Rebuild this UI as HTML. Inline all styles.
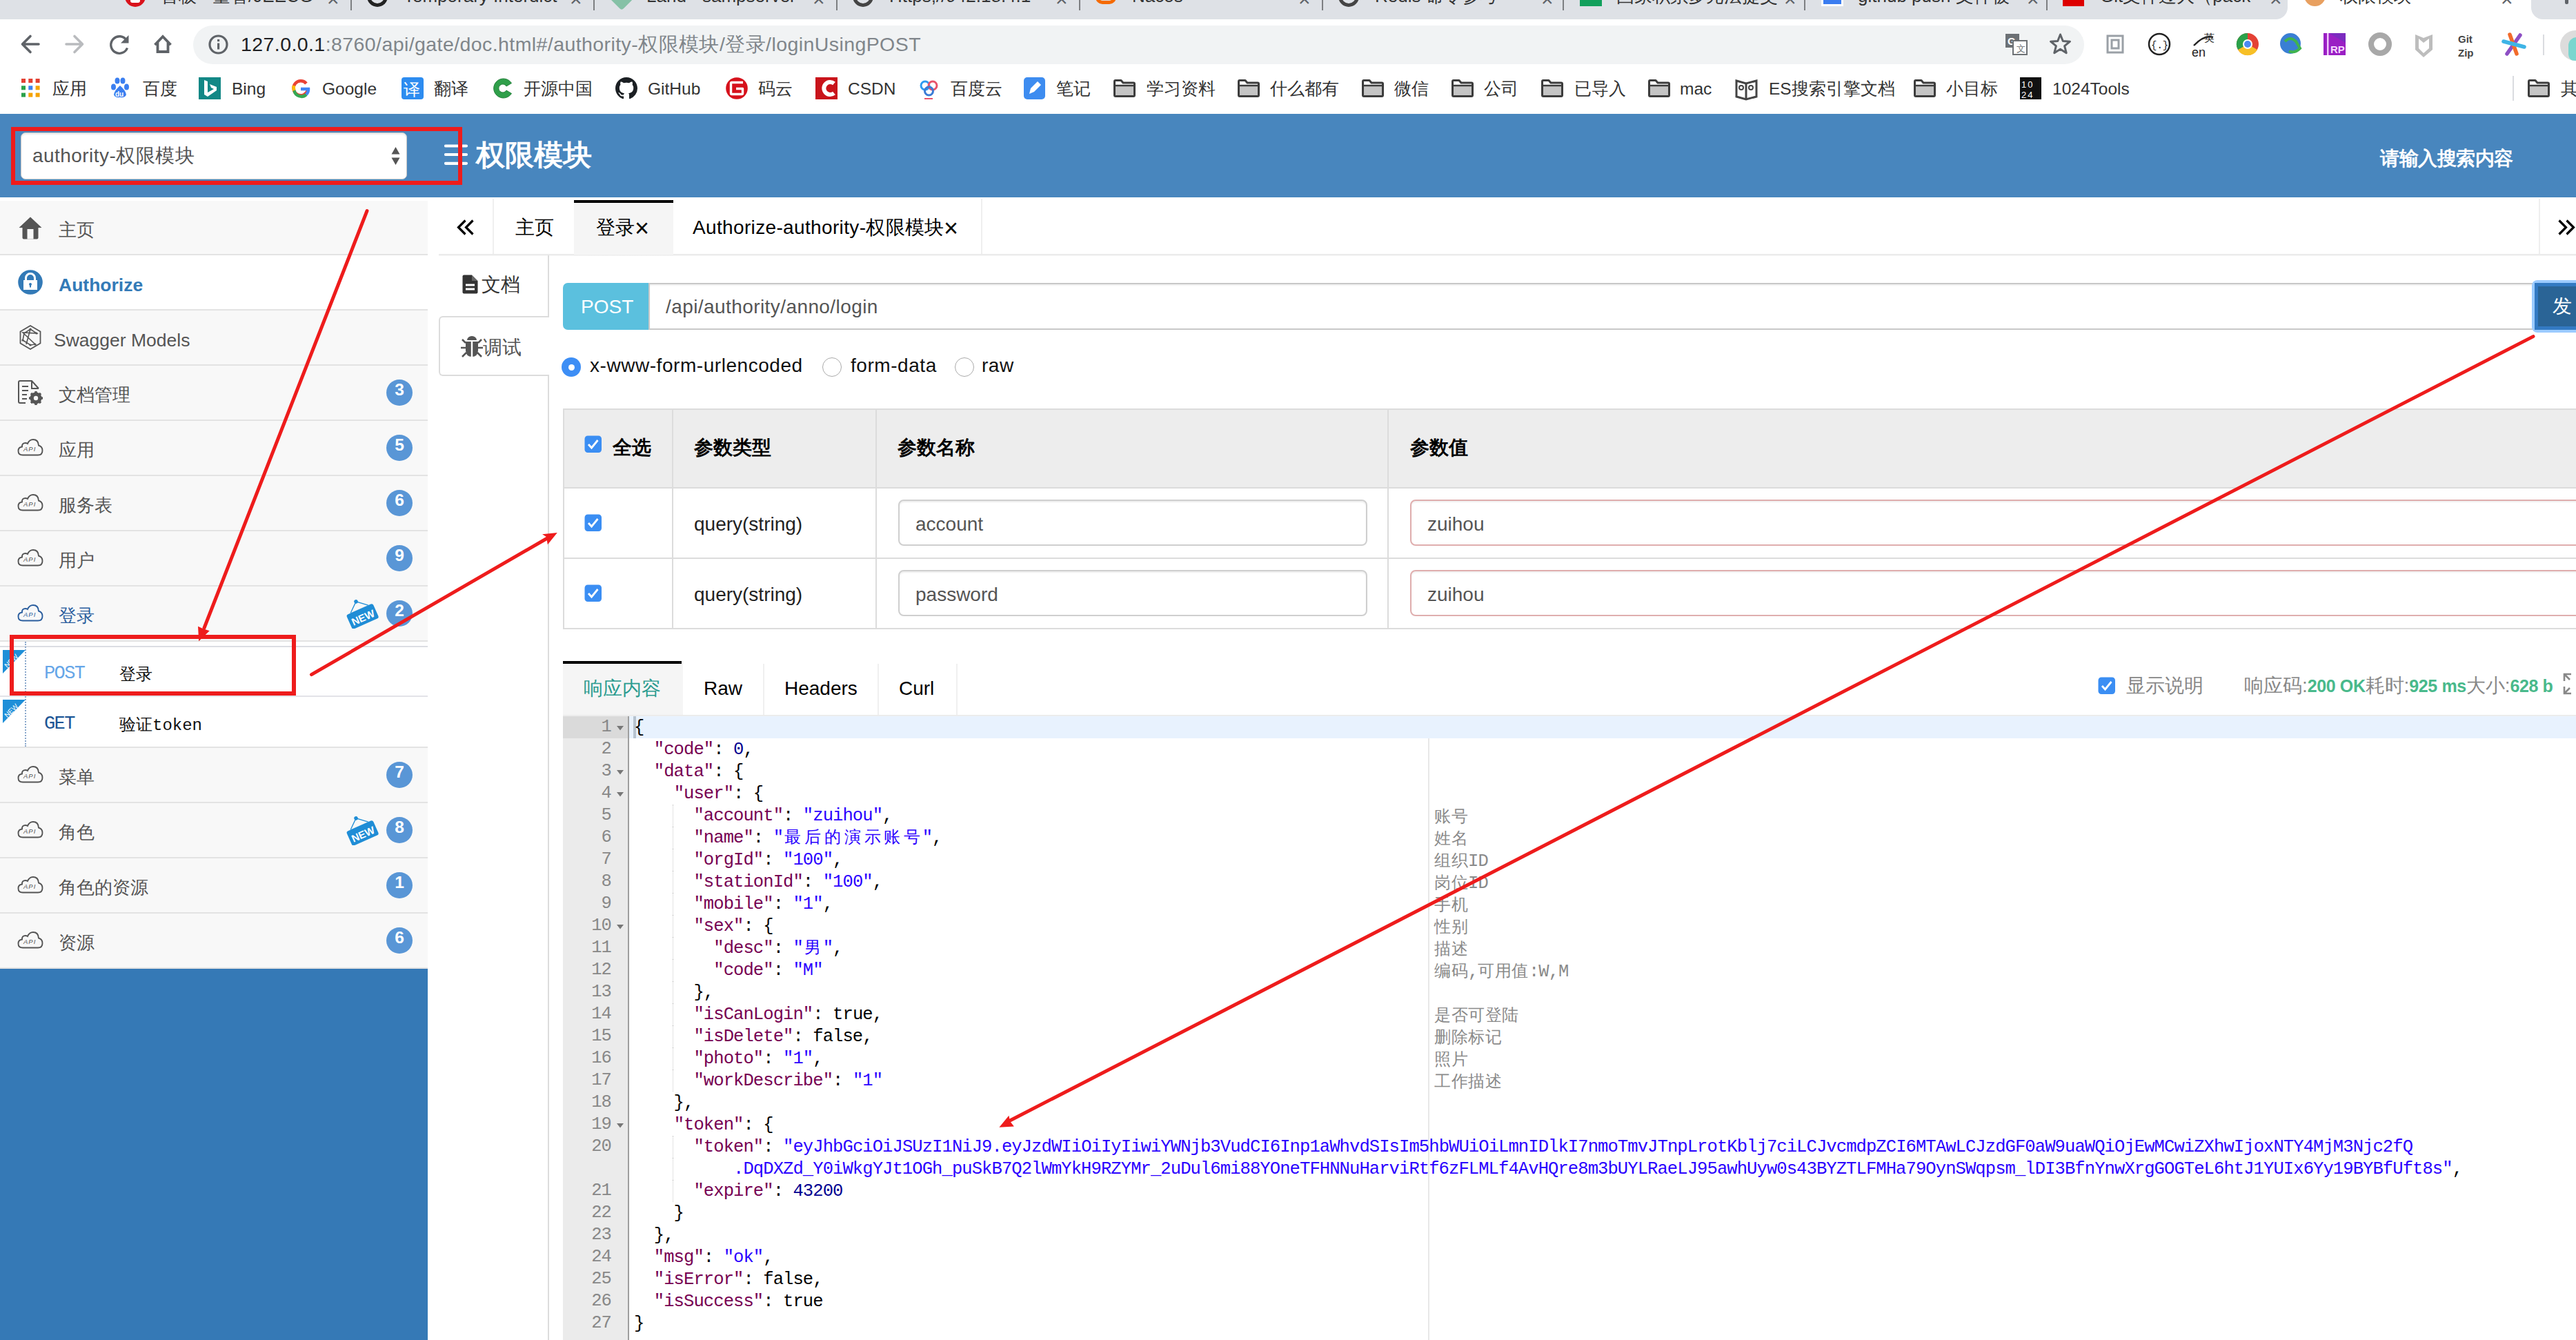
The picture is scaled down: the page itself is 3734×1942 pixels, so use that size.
<!DOCTYPE html>
<html><head><meta charset="utf-8">
<style>
*{margin:0;padding:0;box-sizing:border-box}
html,body{width:3734px;height:1942px;overflow:hidden;background:#fff;font-family:"Liberation Sans",sans-serif}
body{position:relative}
.a{position:absolute}
.t{position:absolute;white-space:nowrap;line-height:1}
.m{font-family:"Liberation Mono",monospace}
.cj{display:inline-block;overflow:visible;white-space:nowrap}
</style></head><body>
<!-- ===== TAB STRIP ===== -->
<div class="a" style="left:0;top:0;width:3734px;height:28px;background:#dee1e6;overflow:hidden">
 <div class="a" style="left:508px;top:0;width:2px;height:15px;background:#7d7f82"></div>
 <div class="a" style="left:860px;top:0;width:2px;height:15px;background:#7d7f82"></div>
 <div class="a" style="left:1212px;top:0;width:2px;height:15px;background:#7d7f82"></div>
 <div class="a" style="left:1564px;top:0;width:2px;height:15px;background:#7d7f82"></div>
 <div class="a" style="left:1916px;top:0;width:2px;height:15px;background:#7d7f82"></div>
 <div class="a" style="left:2265px;top:0;width:2px;height:15px;background:#7d7f82"></div>
 <div class="a" style="left:2615px;top:0;width:2px;height:15px;background:#7d7f82"></div>
 <div class="a" style="left:2966px;top:0;width:2px;height:15px;background:#7d7f82"></div>
 <!-- icons (bottoms) -->
 <div class="a" style="left:181px;top:-20px;width:30px;height:30px;border-radius:15px;background:#d9121b"></div>
 <div class="a" style="left:189px;top:-14px;width:14px;height:18px;background:#fff;border-radius:3px"></div>
 <div class="a" style="left:532px;top:-20px;width:30px;height:30px;border-radius:15px;border:5px solid #222;border-top-color:transparent"></div>
 <div class="a" style="left:884px;top:-16px;width:30px;height:24px;background:#5fb38a;transform:rotate(45deg);border-radius:4px;opacity:.7"></div>
 <div class="a" style="left:1236px;top:-20px;width:30px;height:30px;border-radius:15px;border:5px solid #444"></div>
 <div class="a" style="left:1588px;top:-18px;width:30px;height:24px;border:5px solid #f56a00;border-top:none;border-radius:0 0 10px 10px"></div>
 <div class="a" style="left:1940px;top:-20px;width:30px;height:30px;border-radius:15px;border:5px solid #444"></div>
 <div class="a" style="left:2290px;top:-10px;width:32px;height:19px;background:#12a05c"></div>
 <div class="a" style="left:2640px;top:-10px;width:32px;height:19px;background:#3a7cf0;border:3px solid #fff"></div>
 <div class="a" style="left:2990px;top:-10px;width:31px;height:19px;background:#d00"></div>
 <div class="a" style="left:3290px;top:0;width:400px;height:28px;background:#fff"></div>
 <div class="a" style="left:3270px;top:0;width:46px;height:28px;background:#dee1e6;border-radius:0 0 17px 0"></div>
 <div class="a" style="left:3669px;top:0;width:80px;height:28px;background:#dee1e6;border-radius:0 0 0 17px"></div>
 <div class="a" style="left:3718px;top:-10px;width:5px;height:16px;background:#5f6368;border-radius:2px"></div>
 <div class="a" style="left:3340px;top:-22px;width:31px;height:31px;border-radius:16px;background:#e8a060"></div>
 <!-- clipped titles -->
<div class="t" style="left:474px;top:-16px;font-size:30px;color:#5f6368">×</div><div class="t" style="left:826px;top:-16px;font-size:30px;color:#5f6368">×</div><div class="t" style="left:1178px;top:-16px;font-size:30px;color:#5f6368">×</div><div class="t" style="left:1530px;top:-16px;font-size:30px;color:#5f6368">×</div><div class="t" style="left:1882px;top:-16px;font-size:30px;color:#5f6368">×</div><div class="t" style="left:2234px;top:-16px;font-size:30px;color:#5f6368">×</div><div class="t" style="left:2586px;top:-16px;font-size:30px;color:#5f6368">×</div><div class="t" style="left:2938px;top:-16px;font-size:30px;color:#5f6368">×</div><div class="t" style="left:3290px;top:-16px;font-size:30px;color:#5f6368">×</div><div class="t" style="left:3625px;top:-16px;font-size:30px;color:#5f6368">×</div>
 <div class="t" style="left:233px;top:-19px;font-size:26px;color:#333">首板 - 量管/JEECG</div>
 <div class="t" style="left:585px;top:-19px;font-size:26px;color:#333">Temporary Interdict</div>
 <div class="t" style="left:937px;top:-19px;font-size:26px;color:#333">Land - sampserver</div>
 <div class="t" style="left:1289px;top:-19px;font-size:26px;color:#333">Https;//942.18.4.1</div>
 <div class="t" style="left:1641px;top:-19px;font-size:26px;color:#333">Nacos</div>
 <div class="t" style="left:1993px;top:-19px;font-size:26px;color:#333">Redis 命令参考</div>
 <div class="t" style="left:2343px;top:-19px;font-size:26px;color:#333">国家积累多元法提交</div>
 <div class="t" style="left:2693px;top:-19px;font-size:26px;color:#333">github push 文件被</div>
 <div class="t" style="left:3044px;top:-19px;font-size:26px;color:#333">Git文件过大（pack</div>
 <div class="t" style="left:3392px;top:-19px;font-size:26px;color:#333">权限模块</div>
</div>
<!-- ===== TOOLBAR ===== -->
<div class="a" style="left:0;top:28px;width:3734px;height:137px;background:#fff"></div>
<svg class="a" style="left:0;top:28px" width="400" height="72" viewBox="0 28 400 72">
 <g fill="none" stroke="#5f6368" stroke-width="3.6" stroke-linecap="round" stroke-linejoin="round">
  <path d="M56 64 H33 M44 52.5 L32.5 64 L44 75.5"/>
 </g>
 <g fill="none" stroke="#b9bbbe" stroke-width="3.6" stroke-linecap="round" stroke-linejoin="round">
  <path d="M96 64 H119 M108 52.5 L119.5 64 L108 75.5"/>
 </g>
 <path d="M183.5 58.5 A12.3 12.3 0 1 0 184.5 69.5" fill="none" stroke="#5f6368" stroke-width="3.4"/>
 <path d="M186.5 51 L186.5 62.5 L175 62.5 Z" fill="#5f6368"/>
 <path d="M224.5 65 L236 53 L247.5 65 M228.5 61.5 V75 H243.5 V61.5" fill="none" stroke="#5f6368" stroke-width="3.8" stroke-linejoin="miter"/>
</svg>
<div class="a" style="left:280px;top:37px;width:2741px;height:56px;background:#f1f3f4;border-radius:28px"></div>
<svg class="a" style="left:300px;top:48px" width="34" height="34" viewBox="0 0 34 34">
 <circle cx="16.5" cy="16.5" r="12.5" fill="none" stroke="#5f6368" stroke-width="3.2"/>
 <rect x="15" y="14.5" width="3.2" height="9" fill="#5f6368"/><rect x="15" y="9" width="3.2" height="3.2" fill="#5f6368"/>
</svg>
<div class="t" style="left:349px;top:50px;font-size:28.5px;letter-spacing:0.42px;color:#202124">127.0.0.1<span style="color:#80868b">:8760/api/gate/doc.html#/authority-<span class="cj" id="c1" style="width:117.69px">权限模块</span>/<span class="cj" id="c2" style="width:58.84px">登录</span>/loginUsingPOST</span></div>
<!-- omnibox right icons -->
<svg class="a" style="left:2906px;top:47px" width="34" height="36" viewBox="0 0 34 36">
 <rect x="1" y="2" width="20" height="20" fill="#6d7175"/><text x="4" y="18" font-size="15" font-weight="bold" fill="#fff" font-family="Liberation Sans">G</text>
 <rect x="12" y="12" width="20" height="20" fill="#fff" stroke="#6d7175" stroke-width="2"/><text x="17" y="28" font-size="13" fill="#6d7175" font-family="Liberation Sans">文</text>
</svg>
<svg class="a" style="left:2970px;top:47px" width="34" height="34" viewBox="0 0 34 34">
 <path d="M16.5 3 L20.3 12.5 L30.5 13.2 L22.6 19.7 L25.2 29.7 L16.5 24.2 L7.8 29.7 L10.4 19.7 L2.5 13.2 L12.7 12.5 Z" fill="none" stroke="#5f6368" stroke-width="3" stroke-linejoin="round"/>
</svg>
<!-- extension icons -->
<svg class="a" style="left:3050px;top:44px" width="660" height="42" viewBox="3050 44 660 42">
 <g fill="none" stroke="#9aa0a6" stroke-width="3"><rect x="3055" y="52" width="22" height="24"/><rect x="3061" y="58" width="10" height="12"/></g>
 <circle cx="3130" cy="64" r="15" fill="none" stroke="#222" stroke-width="2.5"/><text x="3118" y="70" font-size="14" fill="#222" font-family="Liberation Mono">{.}</text>
 <text x="3177" y="82" font-size="18" fill="#222" font-family="Liberation Sans">en</text><text x="3195" y="60" font-size="15" fill="#222">英</text>
 <path d="M3180 66 Q3195 50 3208 54" fill="none" stroke="#222" stroke-width="2.5"/>
 <circle cx="3258" cy="64" r="16" fill="#e44134"/><path d="M3258 64 L3272 72 A16 16 0 0 1 3244 72Z" fill="#f7c026"/><path d="M3258 48 A16 16 0 0 0 3244 72 L3258 64Z" fill="#2aa14a"/><circle cx="3258" cy="64" r="7" fill="#fff"/><circle cx="3258" cy="64" r="5" fill="#4a8af4"/>
 <circle cx="3320" cy="63" r="15" fill="#3a7fd4"/><path d="M3312 60 Q3320 52 3328 60 L3334 70 Q3326 78 3318 74" fill="none" stroke="#3fb34f" stroke-width="4"/>
 <rect x="3368" y="48" width="32" height="32" fill="#9a1fc4"/><path d="M3376 48 H3400 V62 Z" fill="#7b2cbf"/><rect x="3373" y="48" width="2.5" height="32" fill="#f3c6ff"/><text x="3378" y="77" font-size="15" font-weight="bold" fill="#f6d8ff" font-family="Liberation Sans">RP</text>
 <circle cx="3450" cy="64" r="13" fill="none" stroke="#a8a8a8" stroke-width="8"/>
 <path d="M3501 50 L3513 55 L3526 50 V72 L3513 83 L3501 72 Z" fill="#bdbdbd"/><path d="M3506 56 L3513 62 L3521 56 V70 L3513 77 L3506 70Z" fill="#fff"/>
 <text x="3563" y="62" font-size="15" font-weight="bold" fill="#444" font-family="Liberation Sans">Git</text><text x="3563" y="82" font-size="15" font-weight="bold" fill="#444" font-family="Liberation Sans">Zip</text>
 <g stroke-linecap="round" stroke-width="5.5"><path d="M3653 51 L3634 78" stroke="#8e4fc4"/><path d="M3638 50 L3648 78" stroke="#f26b2b"/><path d="M3629 60 L3659 68" stroke="#3eb4e6"/></g>
 <rect x="3686" y="50" width="2" height="30" fill="#dadce0"/>
</svg>
<div class="a" style="left:3711px;top:44px;width:44px;height:44px;border-radius:22px;background:#dcdcdc;overflow:hidden"><div class="a" style="left:12px;top:10px;width:30px;height:36px;border-radius:12px;background:#7ad6cf"></div></div>
<!-- ===== BOOKMARKS ===== -->
<svg class="a" style="left:0;top:100px" width="3734" height="60" viewBox="0 100 3734 60">
<g transform="translate(1614 115)"><path d="M1.5 3 Q1.5 1.5 3 1.5 H11 L14 5 H29 Q30.5 5 30.5 6.5 V23 Q30.5 24.5 29 24.5 H3 Q1.5 24.5 1.5 23 Z" fill="#fff" stroke="#3c3c3c" stroke-width="3" stroke-linejoin="round"/><rect x="3" y="10" width="26" height="13" fill="#c4c4c4"/><path d="M1.5 9 H30.5" stroke="#3c3c3c" stroke-width="2.5"/></g>
<g transform="translate(1794 115)"><path d="M1.5 3 Q1.5 1.5 3 1.5 H11 L14 5 H29 Q30.5 5 30.5 6.5 V23 Q30.5 24.5 29 24.5 H3 Q1.5 24.5 1.5 23 Z" fill="#fff" stroke="#3c3c3c" stroke-width="3" stroke-linejoin="round"/><rect x="3" y="10" width="26" height="13" fill="#c4c4c4"/><path d="M1.5 9 H30.5" stroke="#3c3c3c" stroke-width="2.5"/></g>
<g transform="translate(1974 115)"><path d="M1.5 3 Q1.5 1.5 3 1.5 H11 L14 5 H29 Q30.5 5 30.5 6.5 V23 Q30.5 24.5 29 24.5 H3 Q1.5 24.5 1.5 23 Z" fill="#fff" stroke="#3c3c3c" stroke-width="3" stroke-linejoin="round"/><rect x="3" y="10" width="26" height="13" fill="#c4c4c4"/><path d="M1.5 9 H30.5" stroke="#3c3c3c" stroke-width="2.5"/></g>
<g transform="translate(2104 115)"><path d="M1.5 3 Q1.5 1.5 3 1.5 H11 L14 5 H29 Q30.5 5 30.5 6.5 V23 Q30.5 24.5 29 24.5 H3 Q1.5 24.5 1.5 23 Z" fill="#fff" stroke="#3c3c3c" stroke-width="3" stroke-linejoin="round"/><rect x="3" y="10" width="26" height="13" fill="#c4c4c4"/><path d="M1.5 9 H30.5" stroke="#3c3c3c" stroke-width="2.5"/></g>
<g transform="translate(2234 115)"><path d="M1.5 3 Q1.5 1.5 3 1.5 H11 L14 5 H29 Q30.5 5 30.5 6.5 V23 Q30.5 24.5 29 24.5 H3 Q1.5 24.5 1.5 23 Z" fill="#fff" stroke="#3c3c3c" stroke-width="3" stroke-linejoin="round"/><rect x="3" y="10" width="26" height="13" fill="#c4c4c4"/><path d="M1.5 9 H30.5" stroke="#3c3c3c" stroke-width="2.5"/></g>
<g transform="translate(2389 115)"><path d="M1.5 3 Q1.5 1.5 3 1.5 H11 L14 5 H29 Q30.5 5 30.5 6.5 V23 Q30.5 24.5 29 24.5 H3 Q1.5 24.5 1.5 23 Z" fill="#fff" stroke="#3c3c3c" stroke-width="3" stroke-linejoin="round"/><rect x="3" y="10" width="26" height="13" fill="#c4c4c4"/><path d="M1.5 9 H30.5" stroke="#3c3c3c" stroke-width="2.5"/></g>
<g transform="translate(2774 115)"><path d="M1.5 3 Q1.5 1.5 3 1.5 H11 L14 5 H29 Q30.5 5 30.5 6.5 V23 Q30.5 24.5 29 24.5 H3 Q1.5 24.5 1.5 23 Z" fill="#fff" stroke="#3c3c3c" stroke-width="3" stroke-linejoin="round"/><rect x="3" y="10" width="26" height="13" fill="#c4c4c4"/><path d="M1.5 9 H30.5" stroke="#3c3c3c" stroke-width="2.5"/></g>
<g transform="translate(3664 115)"><path d="M1.5 3 Q1.5 1.5 3 1.5 H11 L14 5 H29 Q30.5 5 30.5 6.5 V23 Q30.5 24.5 29 24.5 H3 Q1.5 24.5 1.5 23 Z" fill="#fff" stroke="#3c3c3c" stroke-width="3" stroke-linejoin="round"/><rect x="3" y="10" width="26" height="13" fill="#c4c4c4"/><path d="M1.5 9 H30.5" stroke="#3c3c3c" stroke-width="2.5"/></g>
<rect x="31.0" y="114.0" width="6" height="6" fill="#e34133"/>
<rect x="41.3" y="114.0" width="6" height="6" fill="#e34133"/>
<rect x="51.6" y="114.0" width="6" height="6" fill="#e34133"/>
<rect x="31.0" y="124.3" width="6" height="6" fill="#2aa14a"/>
<rect x="41.3" y="124.3" width="6" height="6" fill="#3b82f0"/>
<rect x="51.6" y="124.3" width="6" height="6" fill="#f5a300"/>
<rect x="31.0" y="134.6" width="6" height="6" fill="#2aa14a"/>
<rect x="41.3" y="134.6" width="6" height="6" fill="#f5a300"/>
<rect x="51.6" y="134.6" width="6" height="6" fill="#f5a300"/>
<g fill="#3b7ff0"><ellipse cx="164.5" cy="126" rx="3.5" ry="4.5"/><ellipse cx="170" cy="117" rx="3.5" ry="4.5"/><ellipse cx="178" cy="117" rx="3.5" ry="4.5"/><ellipse cx="183.5" cy="126" rx="3.5" ry="4.5"/><path d="M174 124 Q166 131 165 137 Q166 142 174 141 Q182 142 183 137 Q182 131 174 124Z"/></g><text x="167" y="139.5" font-size="10" font-weight="bold" fill="#fff" font-family="Liberation Sans">du</text>
<rect x="288" y="112" width="32" height="32" fill="#138886"/><path d="M296 116 L301 118 V134 L310 129 L306 127 L304 122 L314 126 V131 L301 140 L296 137 Z" fill="#fff"/>
<g fill="none" stroke-width="4.5"><path d="M444 121 A10.5 10.5 0 1 0 446 131" stroke="#ea4335"/><path d="M426.5 131 A10.5 10.5 0 0 0 444 137" stroke="#34a853"/><path d="M426 124 A10.5 10.5 0 0 0 426.5 131" stroke="#fbbc05"/><path d="M436 129 H447 A10.5 10.5 0 0 1 444 137" stroke="#4285f4"/></g>
<rect x="582" y="112" width="32" height="32" rx="4" fill="#2d8cf0"/><text x="585" y="138" font-size="24" fill="#fff">译</text>
<path d="M741.5 120.5 A14 14 0 1 0 741.5 135.5 L734 131 A6 6 0 1 1 734 125 Z" fill="#2f9f4a" stroke="#27813d" stroke-width="1"/>
<g transform="translate(892 112) scale(2)"><path fill="#1b1f23" d="M8 0C3.58 0 0 3.58 0 8c0 3.54 2.29 6.53 5.47 7.59.4.07.55-.17.55-.38 0-.19-.01-.82-.01-1.49-2.01.37-2.53-.49-2.69-.94-.09-.23-.48-.94-.82-1.13-.28-.15-.68-.52-.01-.53.63-.01 1.08.58 1.23.82.72 1.21 1.87.87 2.33.66.07-.52.28-.87.51-1.07-1.780-.2-3.64-.89-3.64-3.95 0-.87.31-1.59.82-2.15-.08-.2-.36-1.02.08-2.12 0 0 .67-.21 2.2.82.64-.18 1.32-.27 2-.27.68 0 1.36.09 2 .27 1.53-1.04 2.2-.82 2.2-.82.44 1.1.16 1.92.08 2.12.51.56.82 1.27.82 2.15 0 3.07-1.87 3.75-3.65 3.95.29.25.54.73.54 1.48 0 1.07-.01 1.93-.01 2.2 0 .21.15.46.55.38A8.013 8.013 0 0016 8c0-4.42-3.58-8-8-8z"/></g>
<circle cx="1068" cy="128" r="15.8" fill="#d6111b"/><path d="M1077 119.5 H1061 Q1059.5 119.5 1059.5 121 V135 Q1059.5 136.5 1061 136.5 H1075 Q1076.5 136.5 1076.5 135 V128.5 H1067" fill="none" stroke="#fff" stroke-width="3.4" stroke-linejoin="round"/>
<rect x="1182" y="112" width="32" height="32" fill="#c9141b"/><path d="M1209 121 A9 9 0 1 0 1209 135" fill="none" stroke="#fff" stroke-width="6"/>
<circle cx="1341" cy="124" r="6" fill="none" stroke="#2e9bf0" stroke-width="3"/><circle cx="1352" cy="124" r="6" fill="none" stroke="#e8546c" stroke-width="3"/><circle cx="1346.5" cy="132" r="6" fill="none" stroke="#3a7bd5" stroke-width="3"/><rect x="1340" y="142" width="12" height="2" fill="#e8546c"/>
<rect x="1484" y="112" width="31" height="32" rx="5" fill="#3d8cf0"/><path d="M1492 136 L1494 128 L1504 118 L1509 123 L1499 133 Z" fill="#fff"/>
<path d="M2517 117 L2531 121 L2546 117 V140 L2531 144 L2517 140 Z" fill="none" stroke="#444" stroke-width="3"/><path d="M2531 121 V144" stroke="#444" stroke-width="3"/><circle cx="2524" cy="127" r="3" fill="none" stroke="#444" stroke-width="2"/><circle cx="2538" cy="127" r="3" fill="none" stroke="#444" stroke-width="2"/>
<rect x="2928" y="112" width="31" height="32" fill="#111"/><text x="2930" y="127" font-size="13" fill="#fff" font-family="Liberation Sans" letter-spacing="2">10</text><text x="2930" y="142" font-size="13" fill="#fff" font-family="Liberation Sans" letter-spacing="2">24</text>
<rect x="3642" y="110" width="2" height="36" fill="#dadce0"/>
</svg>
<div class="t" style="left:76px;top:117px;font-size:24.5px;color:#333">应用</div>
<div class="t" style="left:207px;top:117px;font-size:24.5px;color:#333">百度</div>
<div class="t" style="left:336px;top:117px;font-size:24.5px;color:#333">Bing</div>
<div class="t" style="left:467px;top:117px;font-size:24.5px;color:#333">Google</div>
<div class="t" style="left:629px;top:117px;font-size:24.5px;color:#333">翻译</div>
<div class="t" style="left:759px;top:117px;font-size:24.5px;color:#333">开源中国</div>
<div class="t" style="left:939px;top:117px;font-size:24.5px;color:#333">GitHub</div>
<div class="t" style="left:1099px;top:117px;font-size:24.5px;color:#333">码云</div>
<div class="t" style="left:1229px;top:117px;font-size:24.5px;color:#333">CSDN</div>
<div class="t" style="left:1378px;top:117px;font-size:24.5px;color:#333">百度云</div>
<div class="t" style="left:1531px;top:117px;font-size:24.5px;color:#333">笔记</div>
<div class="t" style="left:1662px;top:117px;font-size:24.5px;color:#333">学习资料</div>
<div class="t" style="left:1841px;top:117px;font-size:24.5px;color:#333">什么都有</div>
<div class="t" style="left:2021px;top:117px;font-size:24.5px;color:#333">微信</div>
<div class="t" style="left:2151px;top:117px;font-size:24.5px;color:#333">公司</div>
<div class="t" style="left:2282px;top:117px;font-size:24.5px;color:#333">已导入</div>
<div class="t" style="left:2435px;top:117px;font-size:24.5px;color:#333">mac</div>
<div class="t" style="left:2564px;top:117px;font-size:24.5px;color:#333">ES搜索引擎文档</div>
<div class="t" style="left:2821px;top:117px;font-size:24.5px;color:#333">小目标</div>
<div class="t" style="left:2975px;top:117px;font-size:24.5px;color:#333">1024Tools</div>
<div class="t" style="left:3712px;top:117px;font-size:24.5px;color:#333">其</div><!-- ===== APP HEADER ===== -->
<div class="a" style="left:0;top:165px;width:3734px;height:121px;background:#4886be"></div>
<div class="a" style="left:30px;top:192px;width:560px;height:68px;background:#fff;border:1.5px solid #c8c8c8;border-radius:7px;box-shadow:inset 0 2px 2px rgba(0,0,0,.08)"></div>
<div class="t" style="left:47px;top:212px;font-size:28px;letter-spacing:0.45px;color:#555">authority-权限模块</div>
<svg class="a" style="left:566px;top:212px" width="16" height="28" viewBox="0 0 16 28"><path d="M1.5 11.5 L7.5 1 L13.5 11.5 Z M1.5 16.5 L13.5 16.5 L7.5 27 Z" fill="#555"/></svg>
<svg class="a" style="left:644px;top:208px" width="36" height="32" viewBox="0 0 36 32"><g stroke="#fff" stroke-width="4.2" stroke-linecap="round"><path d="M2 3.5 H32 M2 16 H32 M2 28.8 H32"/></g></svg>
<div class="t" style="left:690px;top:204px;font-size:41.5px;font-weight:bold;color:#fff">权限模块</div>
<div class="t" style="left:3450px;top:216px;font-size:28px;color:#fff;font-weight:bold;letter-spacing:-0.5px">请输入搜索内容</div>
<!-- ===== SIDEBAR ===== -->
<div class="a" style="left:0;top:286px;width:620px;height:1656px;background:#3579b6"></div>
<div class="a" style="left:0;top:286px;width:620px;height:1117px;background:#fff"></div>
<div class="a" style="left:0;top:291px;width:620px;height:77px;background:#f8f8f8"></div>
<div class="a" style="left:0;top:368px;width:620px;height:2px;background:#e3e3e3"></div>
<svg class="a" style="left:26px;top:313.5px" width="36" height="34" viewBox="0 0 36 34"><path d="M18 0.5 L34.5 16 H29.5 V30.5 Q29.5 32.5 27.5 32.5 H8.5 Q6.5 32.5 6.5 30.5 V16 H1.5 Z" fill="#555"/><rect x="13.5" y="18" width="9" height="14.5" fill="#f8f8f8"/></svg>
<div class="t" style="left:85px;top:319.5px;font-size:26px;color:#555">主页</div>
<div class="a" style="left:0;top:370px;width:620px;height:78px;background:#fff"></div>
<div class="a" style="left:0;top:448px;width:620px;height:2px;background:#e3e3e3"></div>
<svg class="a" style="left:26px;top:390.5px" width="36" height="36" viewBox="0 0 36 36"><circle cx="18" cy="18" r="17.8" fill="#337ab7"/><path d="M11.5 15 V12 A6.5 6.5 0 0 1 24.5 12 V15" fill="none" stroke="#fff" stroke-width="3"/><rect x="8" y="15" width="20" height="14" fill="#fff"/><circle cx="18" cy="21" r="2" fill="#337ab7"/><rect x="17" y="21" width="2" height="4.5" fill="#337ab7"/></svg>
<div class="t" style="left:85px;top:399.5px;font-size:26.5px;font-weight:bold;color:#337ab7">Authorize</div>
<div class="a" style="left:0;top:450px;width:620px;height:78px;background:#f8f8f8"></div>
<div class="a" style="left:0;top:528px;width:620px;height:2px;background:#e3e3e3"></div>
<svg class="a" style="left:28px;top:471.0px" width="34" height="36" viewBox="0 0 34 36"><path d="M16 1 L30.5 9.5 V26.5 L16 35 L1.5 26.5 V9.5 Z" fill="none" stroke="#555" stroke-width="1.8"/><path d="M16 6 L25 12 L5 11 L23 28 L16 29 L5 22 L7 12 L16 6 L10 28" fill="none" stroke="#555" stroke-width="1.6"/><g fill="#555"><circle cx="16" cy="6" r="1.6"/><circle cx="25" cy="12" r="1.6"/><circle cx="5" cy="22" r="1.6"/><circle cx="23" cy="28" r="1.6"/><circle cx="16" cy="29" r="1.6"/></g></svg>
<div class="t" style="left:78px;top:480px;font-size:26.5px;color:#555">Swagger Models</div>
<div class="a" style="left:0;top:530px;width:620px;height:78px;background:#f8f8f8"></div>
<div class="a" style="left:0;top:608px;width:620px;height:2px;background:#e3e3e3"></div>
<svg class="a" style="left:26px;top:551.0px" width="38" height="38" viewBox="0 0 38 38"><path d="M11 33 H3 Q1 33 1 31 V3 Q1 1 3 1 H20 L30 12" fill="none" stroke="#555" stroke-width="2"/><path d="M20 1 V12 H30" fill="none" stroke="#555" stroke-width="2"/><path d="M6 9 H15 M6 15 H15 M6 21 H13 M6 27 H13" stroke="#555" stroke-width="2"/><circle cx="26" cy="26" r="6.5" fill="none" stroke="#555" stroke-width="4"/><g stroke="#555" stroke-width="3.5"><path d="M26 16 V36 M16 26 H36 M19 19 L33 33 M33 19 L19 33"/></g><circle cx="26" cy="26" r="3.2" fill="#f8f8f8"/></svg>
<div class="t" style="left:85px;top:559px;font-size:26px;color:#555">文档管理</div>
<div class="a" style="left:560px;top:550px;width:38px;height:38px;border-radius:19px;background:#5996d6"></div><div class="t" style="left:560px;top:552.6px;width:38px;text-align:center;font-size:24.5px;font-weight:bold;color:#fff">3</div>
<div class="a" style="left:0;top:610px;width:620px;height:78px;background:#f8f8f8"></div>
<div class="a" style="left:0;top:688px;width:620px;height:2px;background:#e3e3e3"></div>
<svg class="a" style="left:25px;top:636.0px" width="38" height="26" viewBox="0 0 38 26"><path d="M8 23.5 Q1.5 23.5 1.5 17.5 Q1.5 12 7 11.5 Q6.5 6 12 6 Q13.5 6 15 7 Q17.5 1 23 1 Q30.5 1 31 9.5 Q36.5 11 36.5 17 Q36.5 23.5 30 23.5 Z" fill="none" stroke="#555" stroke-width="1.9"/><text x="9" y="18" font-size="9.5" font-style="italic" fill="#555" font-family="Liberation Sans" letter-spacing="1">API</text></svg>
<div class="t" style="left:85px;top:639px;font-size:26px;color:#555">应用</div>
<div class="a" style="left:560px;top:630px;width:38px;height:38px;border-radius:19px;background:#5996d6"></div><div class="t" style="left:560px;top:632.6px;width:38px;text-align:center;font-size:24.5px;font-weight:bold;color:#fff">5</div>
<div class="a" style="left:0;top:690px;width:620px;height:78px;background:#f8f8f8"></div>
<div class="a" style="left:0;top:768px;width:620px;height:2px;background:#e3e3e3"></div>
<svg class="a" style="left:25px;top:716.0px" width="38" height="26" viewBox="0 0 38 26"><path d="M8 23.5 Q1.5 23.5 1.5 17.5 Q1.5 12 7 11.5 Q6.5 6 12 6 Q13.5 6 15 7 Q17.5 1 23 1 Q30.5 1 31 9.5 Q36.5 11 36.5 17 Q36.5 23.5 30 23.5 Z" fill="none" stroke="#555" stroke-width="1.9"/><text x="9" y="18" font-size="9.5" font-style="italic" fill="#555" font-family="Liberation Sans" letter-spacing="1">API</text></svg>
<div class="t" style="left:85px;top:719px;font-size:26px;color:#555">服务表</div>
<div class="a" style="left:560px;top:710px;width:38px;height:38px;border-radius:19px;background:#5996d6"></div><div class="t" style="left:560px;top:712.6px;width:38px;text-align:center;font-size:24.5px;font-weight:bold;color:#fff">6</div>
<div class="a" style="left:0;top:770px;width:620px;height:78px;background:#f8f8f8"></div>
<div class="a" style="left:0;top:848px;width:620px;height:2px;background:#e3e3e3"></div>
<svg class="a" style="left:25px;top:796.0px" width="38" height="26" viewBox="0 0 38 26"><path d="M8 23.5 Q1.5 23.5 1.5 17.5 Q1.5 12 7 11.5 Q6.5 6 12 6 Q13.5 6 15 7 Q17.5 1 23 1 Q30.5 1 31 9.5 Q36.5 11 36.5 17 Q36.5 23.5 30 23.5 Z" fill="none" stroke="#555" stroke-width="1.9"/><text x="9" y="18" font-size="9.5" font-style="italic" fill="#555" font-family="Liberation Sans" letter-spacing="1">API</text></svg>
<div class="t" style="left:85px;top:799px;font-size:26px;color:#555">用户</div>
<div class="a" style="left:560px;top:790px;width:38px;height:38px;border-radius:19px;background:#5996d6"></div><div class="t" style="left:560px;top:792.6px;width:38px;text-align:center;font-size:24.5px;font-weight:bold;color:#fff">9</div>
<div class="a" style="left:0;top:850px;width:620px;height:78px;background:#f8f8f8"></div>
<div class="a" style="left:0;top:928px;width:620px;height:2px;background:#e3e3e3"></div>
<svg class="a" style="left:25px;top:876.0px" width="38" height="26" viewBox="0 0 38 26"><path d="M8 23.5 Q1.5 23.5 1.5 17.5 Q1.5 12 7 11.5 Q6.5 6 12 6 Q13.5 6 15 7 Q17.5 1 23 1 Q30.5 1 31 9.5 Q36.5 11 36.5 17 Q36.5 23.5 30 23.5 Z" fill="none" stroke="#2b5e9e" stroke-width="1.9"/><text x="9" y="18" font-size="9.5" font-style="italic" fill="#2b5e9e" font-family="Liberation Sans" letter-spacing="1">API</text></svg>
<div class="t" style="left:85px;top:879px;font-size:26px;color:#2b5e9e">登录</div>
<div class="a" style="left:560px;top:870px;width:38px;height:38px;border-radius:19px;background:#5996d6"></div><div class="t" style="left:560px;top:872.6px;width:38px;text-align:center;font-size:24.5px;font-weight:bold;color:#fff">2</div>
<svg class="a" style="left:500px;top:865.0px" width="50" height="46" viewBox="0 0 50 46"><g transform="rotate(-24 25 27)"><rect x="4" y="17" width="42" height="23" rx="3" fill="#1f8dd6"/><path d="M11 17 L25 5 L39 17" fill="none" stroke="#1f8dd6" stroke-width="1.3"/><circle cx="25" cy="5" r="2.8" fill="#1f8dd6"/><text x="7.5" y="35.5" font-size="15" font-weight="bold" fill="#fff" font-family="Liberation Sans">NEW</text></g></svg>
<div class="a" style="left:0;top:1084px;width:620px;height:78px;background:#f8f8f8"></div>
<div class="a" style="left:0;top:1162px;width:620px;height:2px;background:#e3e3e3"></div>
<svg class="a" style="left:25px;top:1110.0px" width="38" height="26" viewBox="0 0 38 26"><path d="M8 23.5 Q1.5 23.5 1.5 17.5 Q1.5 12 7 11.5 Q6.5 6 12 6 Q13.5 6 15 7 Q17.5 1 23 1 Q30.5 1 31 9.5 Q36.5 11 36.5 17 Q36.5 23.5 30 23.5 Z" fill="none" stroke="#555" stroke-width="1.9"/><text x="9" y="18" font-size="9.5" font-style="italic" fill="#555" font-family="Liberation Sans" letter-spacing="1">API</text></svg>
<div class="t" style="left:85px;top:1113px;font-size:26px;color:#555">菜单</div>
<div class="a" style="left:560px;top:1104px;width:38px;height:38px;border-radius:19px;background:#5996d6"></div><div class="t" style="left:560px;top:1106.6px;width:38px;text-align:center;font-size:24.5px;font-weight:bold;color:#fff">7</div>
<div class="a" style="left:0;top:1164px;width:620px;height:78px;background:#f8f8f8"></div>
<div class="a" style="left:0;top:1242px;width:620px;height:2px;background:#e3e3e3"></div>
<svg class="a" style="left:25px;top:1190.0px" width="38" height="26" viewBox="0 0 38 26"><path d="M8 23.5 Q1.5 23.5 1.5 17.5 Q1.5 12 7 11.5 Q6.5 6 12 6 Q13.5 6 15 7 Q17.5 1 23 1 Q30.5 1 31 9.5 Q36.5 11 36.5 17 Q36.5 23.5 30 23.5 Z" fill="none" stroke="#555" stroke-width="1.9"/><text x="9" y="18" font-size="9.5" font-style="italic" fill="#555" font-family="Liberation Sans" letter-spacing="1">API</text></svg>
<div class="t" style="left:85px;top:1193px;font-size:26px;color:#555">角色</div>
<div class="a" style="left:560px;top:1184px;width:38px;height:38px;border-radius:19px;background:#5996d6"></div><div class="t" style="left:560px;top:1186.6px;width:38px;text-align:center;font-size:24.5px;font-weight:bold;color:#fff">8</div>
<svg class="a" style="left:500px;top:1179.0px" width="50" height="46" viewBox="0 0 50 46"><g transform="rotate(-24 25 27)"><rect x="4" y="17" width="42" height="23" rx="3" fill="#1f8dd6"/><path d="M11 17 L25 5 L39 17" fill="none" stroke="#1f8dd6" stroke-width="1.3"/><circle cx="25" cy="5" r="2.8" fill="#1f8dd6"/><text x="7.5" y="35.5" font-size="15" font-weight="bold" fill="#fff" font-family="Liberation Sans">NEW</text></g></svg>
<div class="a" style="left:0;top:1244px;width:620px;height:78px;background:#f8f8f8"></div>
<div class="a" style="left:0;top:1322px;width:620px;height:2px;background:#e3e3e3"></div>
<svg class="a" style="left:25px;top:1270.0px" width="38" height="26" viewBox="0 0 38 26"><path d="M8 23.5 Q1.5 23.5 1.5 17.5 Q1.5 12 7 11.5 Q6.5 6 12 6 Q13.5 6 15 7 Q17.5 1 23 1 Q30.5 1 31 9.5 Q36.5 11 36.5 17 Q36.5 23.5 30 23.5 Z" fill="none" stroke="#555" stroke-width="1.9"/><text x="9" y="18" font-size="9.5" font-style="italic" fill="#555" font-family="Liberation Sans" letter-spacing="1">API</text></svg>
<div class="t" style="left:85px;top:1273px;font-size:26px;color:#555">角色的资源</div>
<div class="a" style="left:560px;top:1264px;width:38px;height:38px;border-radius:19px;background:#5996d6"></div><div class="t" style="left:560px;top:1266.6px;width:38px;text-align:center;font-size:24.5px;font-weight:bold;color:#fff">1</div>
<div class="a" style="left:0;top:1324px;width:620px;height:78px;background:#f8f8f8"></div>
<div class="a" style="left:0;top:1402px;width:620px;height:2px;background:#e3e3e3"></div>
<svg class="a" style="left:25px;top:1350.0px" width="38" height="26" viewBox="0 0 38 26"><path d="M8 23.5 Q1.5 23.5 1.5 17.5 Q1.5 12 7 11.5 Q6.5 6 12 6 Q13.5 6 15 7 Q17.5 1 23 1 Q30.5 1 31 9.5 Q36.5 11 36.5 17 Q36.5 23.5 30 23.5 Z" fill="none" stroke="#555" stroke-width="1.9"/><text x="9" y="18" font-size="9.5" font-style="italic" fill="#555" font-family="Liberation Sans" letter-spacing="1">API</text></svg>
<div class="t" style="left:85px;top:1353px;font-size:26px;color:#555">资源</div>
<div class="a" style="left:560px;top:1344px;width:38px;height:38px;border-radius:19px;background:#5996d6"></div><div class="t" style="left:560px;top:1346.6px;width:38px;text-align:center;font-size:24.5px;font-weight:bold;color:#fff">6</div>
<div class="a" style="left:0;top:936px;width:620px;height:2px;background:#dcdde3"></div>
<div class="a" style="left:0;top:1008px;width:620px;height:2px;background:#e3e3e8"></div>
<div class="a" style="left:0;top:1082px;width:620px;height:2px;background:#e3e3e3"></div>
<div class="a" style="left:36px;top:930px;width:0;height:152px;border-left:2px dotted #8aa8cc"></div>
<svg class="a" style="left:4px;top:942px" width="34" height="34" viewBox="0 0 34 34"><path d="M0 0 H33 L0 34 Z" fill="#1e8fd8"/><text transform="translate(6.5 26.5) rotate(-45)" font-size="10" fill="#fff" font-family="Liberation Sans">NEW</text></svg>
<svg class="a" style="left:4px;top:1014px" width="34" height="34" viewBox="0 0 34 34"><path d="M0 0 H33 L0 34 Z" fill="#1e8fd8"/><text transform="translate(6.5 26.5) rotate(-45)" font-size="10" fill="#fff" font-family="Liberation Sans">NEW</text></svg>
<div class="t" style="left:64px;top:963px;font-family:'Liberation Mono',monospace;font-size:27px;letter-spacing:-1.6px;color:#66a6e8">POST</div>
<div class="t" style="left:173px;top:964.5px;font-size:24px;color:#111">登录</div>
<div class="t" style="left:64px;top:1036px;font-family:'Liberation Mono',monospace;font-size:27px;letter-spacing:-1.6px;color:#1d5595">GET</div>
<div class="t" style="left:173px;top:1037.5px;font-size:24px;color:#111"><span class="cj" id="c6" style="width:48px">验证</span><span style="font-family:'Liberation Mono',monospace">token</span></div>
<!-- ===== MAIN TABS ===== -->
<div class="a" style="left:636px;top:368px;width:3098px;height:3px;background:linear-gradient(#e6e6e6,#f6f6f6)"></div>
<div class="a" style="left:714px;top:288px;width:2px;height:80px;background:#efefef"></div>
<div class="a" style="left:1422px;top:288px;width:2px;height:80px;background:#efefef"></div>
<div class="a" style="left:3680px;top:288px;width:2px;height:80px;background:#efefef"></div>
<svg class="a" style="left:662px;top:318px" width="26" height="24" viewBox="0 0 26 24"><path d="M12.5 1.5 L2.5 11.5 L12.5 21.5 M23.5 1.5 L13.5 11.5 L23.5 21.5" fill="none" stroke="#000" stroke-width="3.2"/></svg>
<div class="t" style="left:747px;top:316px;font-size:28px;color:#000">主页</div>
<div class="a" style="left:832px;top:294px;width:144px;height:75px;background:#f5f5f5"></div>
<div class="a" style="left:832px;top:290px;width:144px;height:4px;background:#000"></div>
<div class="t" style="left:864px;top:316px;font-size:28px;color:#000">登录</div><div class="t" style="left:920px;top:313px;font-size:36px;color:#000;font-weight:300">×</div>
<div class="t" style="left:1004px;top:316px;font-size:28px;color:#000;letter-spacing:0.35px">Authorize-authority-权限模块</div><div class="t" style="left:1368px;top:313px;font-size:36px;color:#000">×</div>
<svg class="a" style="left:3707px;top:318px" width="26" height="24" viewBox="0 0 26 24"><path d="M2.5 1.5 L12.5 11.5 L2.5 21.5 M13.5 1.5 L23.5 11.5 L13.5 21.5" fill="none" stroke="#000" stroke-width="3.2"/></svg>
<!-- ===== LEFT VERTICAL TABS ===== -->
<div class="a" style="left:794px;top:370px;width:2px;height:89px;background:#dcdcdc"></div>
<div class="a" style="left:636px;top:458px;width:160px;height:87px;background:#fff;border:2px solid #dcdcdc;border-right:none;border-radius:6px 0 0 6px"></div>
<div class="a" style="left:794px;top:544px;width:2px;height:1398px;background:#dcdcdc"></div>
<svg class="a" style="left:670px;top:398px" width="24" height="28" viewBox="0 0 24 28"><path d="M2.5 0.5 H14 L22.5 9 V25.5 Q22.5 27.5 20.5 27.5 H2.5 Q0.5 27.5 0.5 25.5 V2.5 Q0.5 0.5 2.5 0.5 Z" fill="#333"/><path d="M14 0.5 V9 H22.5" fill="#fff" opacity=".25"/><rect x="5" y="13.5" width="13" height="3" fill="#fff"/><rect x="5" y="19.5" width="13" height="3" fill="#fff"/></svg>
<div class="t" style="left:698px;top:399px;font-size:28px;color:#333">文档</div>
<svg class="a" style="left:667px;top:485px" width="34" height="34" viewBox="0 0 34 34"><path d="M10 8 A7 6 0 0 1 24 8 Z" fill="#555"/><path d="M8 10 H26 V22 Q26 32 17 32 Q8 32 8 22 Z" fill="#555"/><rect x="15.8" y="10" width="2.4" height="22" fill="#fff"/><g stroke="#555" stroke-width="2.6"><path d="M8 12 L3 7 M26 12 L31 7 M8 19 H1 M26 19 H33 M9 26 L3 32 M25 26 L31 32"/></g></svg>
<div class="t" style="left:700px;top:490px;font-size:28px;color:#555">调试</div>
<!-- ===== URL BAR ===== -->
<div class="a" style="left:816px;top:410px;width:125px;height:68px;background:#5bc0de;border-radius:7px 0 0 7px"></div>
<div class="t" style="left:842px;top:431px;font-size:28px;color:#fff">POST</div>
<div class="a" style="left:940px;top:410px;width:2740px;height:68px;background:#fff;border:2px solid #c8c8c8;border-right:none;box-shadow:inset 0 2px 2px rgba(0,0,0,.06)"></div>
<div class="t" style="left:965px;top:431px;font-size:28px;letter-spacing:0.42px;color:#555">/api/authority/anno/login</div>
<div class="a" style="left:3670px;top:406px;width:80px;height:76px;background:#9ccbff;border-radius:8px"></div>
<div class="a" style="left:3674px;top:410px;width:70px;height:68px;background:#2a6496;border:5px solid #337ac3"></div>
<div class="t" style="left:3700px;top:430px;font-size:28px;color:#fff">发</div>
<!-- radios -->
<div class="a" style="left:814px;top:518px;width:28px;height:28px;border-radius:14px;background:#3d8ef5"></div>
<div class="a" style="left:824px;top:528px;width:8.5px;height:8.5px;border-radius:5px;background:#fff"></div>
<div class="t" style="left:855px;top:516px;font-size:28px;letter-spacing:0.55px;color:#111">x-www-form-urlencoded</div>
<div class="a" style="left:1192px;top:518px;width:28px;height:28px;border-radius:14px;background:#fff;border:1.5px solid #aaa"></div>
<div class="t" style="left:1233px;top:516px;font-size:28px;letter-spacing:0.55px;color:#111">form-data</div>
<div class="a" style="left:1384px;top:518px;width:28px;height:28px;border-radius:14px;background:#fff;border:1.5px solid #aaa"></div>
<div class="t" style="left:1423px;top:516px;font-size:28px;letter-spacing:0.55px;color:#111">raw</div>
<!-- ===== PARAM TABLE ===== -->
<div class="a" style="left:816px;top:592px;width:2918px;height:320px;background:#fff;border:2px solid #dcdcdc;border-right:none"></div>
<div class="a" style="left:818px;top:594px;width:2916px;height:112px;background:#ededed"></div>
<div class="a" style="left:818px;top:706px;width:2916px;height:2px;background:#dcdcdc"></div>
<div class="a" style="left:818px;top:808px;width:2916px;height:2px;background:#dcdcdc"></div>
<div class="a" style="left:974px;top:594px;width:2px;height:316px;background:#dcdcdc"></div>
<div class="a" style="left:1269px;top:594px;width:2px;height:316px;background:#dcdcdc"></div>
<div class="a" style="left:2011px;top:594px;width:2px;height:316px;background:#dcdcdc"></div>
<div class="t" style="left:888px;top:635px;font-size:28px;font-weight:bold;color:#000">全选</div>
<div class="t" style="left:1006px;top:635px;font-size:28px;font-weight:bold;color:#000">参数类型</div>
<div class="t" style="left:1301px;top:635px;font-size:28px;font-weight:bold;color:#000">参数名称</div>
<div class="t" style="left:2044px;top:635px;font-size:28px;font-weight:bold;color:#000">参数值</div>
<div class="t" style="left:1006px;top:746px;font-size:28px;color:#222">query(string)</div>
<div class="t" style="left:1006px;top:848px;font-size:28px;color:#222">query(string)</div>
<div class="a" style="left:1302px;top:724px;width:680px;height:67px;border:2px solid #cfcfcf;border-radius:8px;box-shadow:inset 0 2px 2px rgba(0,0,0,.07)"></div>
<div class="a" style="left:1302px;top:826px;width:680px;height:67px;border:2px solid #cfcfcf;border-radius:8px;box-shadow:inset 0 2px 2px rgba(0,0,0,.07)"></div>
<div class="t" style="left:1327px;top:746px;font-size:28px;color:#555">account</div>
<div class="t" style="left:1327px;top:848px;font-size:28px;color:#555">password</div>
<div class="a" style="left:2044px;top:724px;width:1700px;height:67px;border:2px solid #dfaeae;border-radius:8px;box-shadow:inset 0 2px 2px rgba(0,0,0,.06)"></div>
<div class="a" style="left:2044px;top:826px;width:1700px;height:67px;border:2px solid #dfaeae;border-radius:8px;box-shadow:inset 0 2px 2px rgba(0,0,0,.06)"></div>
<div class="t" style="left:2069px;top:746px;font-size:28px;color:#555">zuihou</div>
<div class="t" style="left:2069px;top:848px;font-size:28px;color:#555">zuihou</div>
<!-- checkboxes -->
<svg class="a" style="left:847px;top:631px" width="26" height="26" viewBox="0 0 26 26"><rect x="0.5" y="0.5" width="24.5" height="24.5" rx="4.5" fill="#3b8ef3"/><path d="M6 13 L10.5 18 L19.5 7" fill="none" stroke="#fff" stroke-width="2.8"/></svg>
<svg class="a" style="left:847px;top:745px" width="26" height="26" viewBox="0 0 26 26"><rect x="0.5" y="0.5" width="24.5" height="24.5" rx="4.5" fill="#3b8ef3"/><path d="M6 13 L10.5 18 L19.5 7" fill="none" stroke="#fff" stroke-width="2.8"/></svg>
<svg class="a" style="left:847px;top:847px" width="26" height="26" viewBox="0 0 26 26"><rect x="0.5" y="0.5" width="24.5" height="24.5" rx="4.5" fill="#3b8ef3"/><path d="M6 13 L10.5 18 L19.5 7" fill="none" stroke="#fff" stroke-width="2.8"/></svg>
<!-- ===== RESPONSE TABS ===== -->
<div class="a" style="left:816px;top:958px;width:172px;height:4px;background:#000"></div>
<div class="a" style="left:816px;top:962px;width:174px;height:76px;background:#f5f5f5"></div>
<div class="a" style="left:1106px;top:962px;width:2px;height:76px;background:#f0f0f0"></div>
<div class="a" style="left:1272px;top:962px;width:2px;height:76px;background:#f0f0f0"></div>
<div class="a" style="left:1386px;top:962px;width:2px;height:76px;background:#f0f0f0"></div>
<div class="t" style="left:846px;top:984px;font-size:28px;color:#2b9c90">响应内容</div>
<div class="t" style="left:1020px;top:984px;font-size:28px;color:#000">Raw</div>
<div class="t" style="left:1137px;top:984px;font-size:28px;color:#000">Headers</div>
<div class="t" style="left:1303px;top:984px;font-size:28px;color:#000">Curl</div>
<svg class="a" style="left:3041px;top:981px" width="26" height="26" viewBox="0 0 26 26"><rect x="0.5" y="0.5" width="24.5" height="24.5" rx="4.5" fill="#3b8ef3"/><path d="M6 13 L10.5 18 L19.5 7" fill="none" stroke="#fff" stroke-width="2.8"/></svg>
<div class="t" style="left:3082px;top:980px;font-size:28px;color:#888">显示说明</div>
<div class="t" style="left:3253px;top:980px;font-size:28px;color:#888"><span class="cj" id="c3" style="width:84px">响应码</span>:<b style="color:#49b98b;font-size:25px;letter-spacing:-0.4px">200 OK</b><span class="cj" id="c4" style="width:56px">耗时</span>:<b style="color:#49b98b;font-size:25px;letter-spacing:-0.4px">925 ms</b><span class="cj" id="c5" style="width:56px">大小</span>:<b style="color:#49b98b;font-size:25px;letter-spacing:-0.4px">628 b</b></div>
<svg class="a" style="left:3714px;top:974px" width="20" height="34" viewBox="0 0 20 34"><g fill="none" stroke="#888" stroke-width="2.6"><path d="M3 13 V3 H13 M3 3 L11 11 M3 21 V31 H13 M3 31 L11 23"/></g></svg>
<div class="a" style="left:816px;top:1036px;width:2918px;height:3px;background:linear-gradient(#e8e8e8,#f4f4f4)"></div>
<!-- ===== EDITOR ===== -->
<style>.cl{position:absolute;left:919px;height:32px;line-height:32px;white-space:pre;font-family:"Liberation Mono",monospace;font-size:var(--fs);letter-spacing:var(--ls)}.cl i{font-style:normal;display:inline-block;width:28.8px;text-align:center;letter-spacing:0;font-size:24px}.gn{position:absolute;left:816px;width:70px;text-align:right;height:32px;line-height:32px;font-family:"Liberation Mono",monospace;font-size:var(--fs);letter-spacing:var(--ls);color:#888}.ds{position:absolute;left:2079px;height:32px;line-height:32px;white-space:pre;font-family:"Liberation Mono",monospace;font-size:var(--fs);letter-spacing:var(--ls);color:#8a8a8a}.ds i{font-style:normal;display:inline-block;width:24.5px;letter-spacing:0;font-size:24px}</style>
<div class="a" style="left:816px;top:1038px;width:95px;height:904px;background:#ebebeb"></div>
<div class="a" style="left:910px;top:1038px;width:2px;height:904px;background:#9f9f9f"></div>
<div class="a" style="left:816px;top:1038px;width:94px;height:32px;background:#dadada"></div>
<div class="a" style="left:912px;top:1038px;width:2822px;height:32px;background:#e8f2fe"></div>
<div class="a" style="left:918px;top:1038px;width:4px;height:32px;background:#b7c3cf"></div>
<div class="a" style="left:2070px;top:1070px;width:2px;height:872px;background:#e8e8e8"></div>
<div class="a" style="left:975px;top:1166px;width:0;height:32px;border-left:1.5px dotted #c8c8c8"></div>
<div class="a" style="left:975px;top:1198px;width:0;height:32px;border-left:1.5px dotted #c8c8c8"></div>
<div class="a" style="left:975px;top:1230px;width:0;height:32px;border-left:1.5px dotted #c8c8c8"></div>
<div class="a" style="left:975px;top:1262px;width:0;height:32px;border-left:1.5px dotted #c8c8c8"></div>
<div class="a" style="left:975px;top:1294px;width:0;height:32px;border-left:1.5px dotted #c8c8c8"></div>
<div class="a" style="left:975px;top:1326px;width:0;height:32px;border-left:1.5px dotted #c8c8c8"></div>
<div class="a" style="left:975px;top:1358px;width:0;height:32px;border-left:1.5px dotted #c8c8c8"></div>
<div class="a" style="left:975px;top:1390px;width:0;height:32px;border-left:1.5px dotted #c8c8c8"></div>
<div class="a" style="left:975px;top:1422px;width:0;height:32px;border-left:1.5px dotted #c8c8c8"></div>
<div class="a" style="left:975px;top:1454px;width:0;height:32px;border-left:1.5px dotted #c8c8c8"></div>
<div class="a" style="left:975px;top:1486px;width:0;height:32px;border-left:1.5px dotted #c8c8c8"></div>
<div class="a" style="left:975px;top:1518px;width:0;height:32px;border-left:1.5px dotted #c8c8c8"></div>
<div class="a" style="left:975px;top:1550px;width:0;height:32px;border-left:1.5px dotted #c8c8c8"></div>
<div class="a" style="left:975px;top:1646px;width:0;height:32px;border-left:1.5px dotted #c8c8c8"></div>
<div class="a" style="left:975px;top:1678px;width:0;height:32px;border-left:1.5px dotted #c8c8c8"></div>
<div class="a" style="left:975px;top:1710px;width:0;height:32px;border-left:1.5px dotted #c8c8c8"></div>
<div style="--fs:25.5px;--ls:-0.9px">
<div class="gn" style="top:1038px">1</div>
<svg class="a" style="left:894px;top:1051.5px" width="10" height="7" viewBox="0 0 10 7"><path d="M0 0 H10 L5 6.5 Z" fill="#777"/></svg>
<div class="cl" style="top:1039px"><span style="color:#000">{</span></div>
<div class="gn" style="top:1070px">2</div>
<div class="cl" style="top:1071px"><span style="color:#000">  </span><span style="color:#760052">&quot;code&quot;</span><span style="color:#000">: </span><span style="color:#000090">0</span><span style="color:#000">,</span></div>
<div class="gn" style="top:1102px">3</div>
<svg class="a" style="left:894px;top:1115.5px" width="10" height="7" viewBox="0 0 10 7"><path d="M0 0 H10 L5 6.5 Z" fill="#777"/></svg>
<div class="cl" style="top:1103px"><span style="color:#000">  </span><span style="color:#760052">&quot;data&quot;</span><span style="color:#000">: {</span></div>
<div class="gn" style="top:1134px">4</div>
<svg class="a" style="left:894px;top:1147.5px" width="10" height="7" viewBox="0 0 10 7"><path d="M0 0 H10 L5 6.5 Z" fill="#777"/></svg>
<div class="cl" style="top:1135px"><span style="color:#000">    </span><span style="color:#760052">&quot;user&quot;</span><span style="color:#000">: {</span></div>
<div class="gn" style="top:1166px">5</div>
<div class="cl" style="top:1167px"><span style="color:#000">      </span><span style="color:#760052">&quot;account&quot;</span><span style="color:#000">: </span><span style="color:#2a00ff">&quot;zuihou&quot;</span><span style="color:#000">,</span></div>
<div class="gn" style="top:1198px">6</div>
<div class="cl" style="top:1199px"><span style="color:#000">      </span><span style="color:#760052">&quot;name&quot;</span><span style="color:#000">: </span><span style="color:#2a00ff">&quot;<i>最</i><i>后</i><i>的</i><i>演</i><i>示</i><i>账</i><i>号</i>&quot;</span><span style="color:#000">,</span></div>
<div class="gn" style="top:1230px">7</div>
<div class="cl" style="top:1231px"><span style="color:#000">      </span><span style="color:#760052">&quot;orgId&quot;</span><span style="color:#000">: </span><span style="color:#2a00ff">&quot;100&quot;</span><span style="color:#000">,</span></div>
<div class="gn" style="top:1262px">8</div>
<div class="cl" style="top:1263px"><span style="color:#000">      </span><span style="color:#760052">&quot;stationId&quot;</span><span style="color:#000">: </span><span style="color:#2a00ff">&quot;100&quot;</span><span style="color:#000">,</span></div>
<div class="gn" style="top:1294px">9</div>
<div class="cl" style="top:1295px"><span style="color:#000">      </span><span style="color:#760052">&quot;mobile&quot;</span><span style="color:#000">: </span><span style="color:#2a00ff">&quot;1&quot;</span><span style="color:#000">,</span></div>
<div class="gn" style="top:1326px">10</div>
<svg class="a" style="left:894px;top:1339.5px" width="10" height="7" viewBox="0 0 10 7"><path d="M0 0 H10 L5 6.5 Z" fill="#777"/></svg>
<div class="cl" style="top:1327px"><span style="color:#000">      </span><span style="color:#760052">&quot;sex&quot;</span><span style="color:#000">: {</span></div>
<div class="gn" style="top:1358px">11</div>
<div class="cl" style="top:1359px"><span style="color:#000">        </span><span style="color:#760052">&quot;desc&quot;</span><span style="color:#000">: </span><span style="color:#2a00ff">&quot;<i>男</i>&quot;</span><span style="color:#000">,</span></div>
<div class="gn" style="top:1390px">12</div>
<div class="cl" style="top:1391px"><span style="color:#000">        </span><span style="color:#760052">&quot;code&quot;</span><span style="color:#000">: </span><span style="color:#2a00ff">&quot;M&quot;</span></div>
<div class="gn" style="top:1422px">13</div>
<div class="cl" style="top:1423px"><span style="color:#000">      },</span></div>
<div class="gn" style="top:1454px">14</div>
<div class="cl" style="top:1455px"><span style="color:#000">      </span><span style="color:#760052">&quot;isCanLogin&quot;</span><span style="color:#000">: true,</span></div>
<div class="gn" style="top:1486px">15</div>
<div class="cl" style="top:1487px"><span style="color:#000">      </span><span style="color:#760052">&quot;isDelete&quot;</span><span style="color:#000">: false,</span></div>
<div class="gn" style="top:1518px">16</div>
<div class="cl" style="top:1519px"><span style="color:#000">      </span><span style="color:#760052">&quot;photo&quot;</span><span style="color:#000">: </span><span style="color:#2a00ff">&quot;1&quot;</span><span style="color:#000">,</span></div>
<div class="gn" style="top:1550px">17</div>
<div class="cl" style="top:1551px"><span style="color:#000">      </span><span style="color:#760052">&quot;workDescribe&quot;</span><span style="color:#000">: </span><span style="color:#2a00ff">&quot;1&quot;</span></div>
<div class="gn" style="top:1582px">18</div>
<div class="cl" style="top:1583px"><span style="color:#000">    },</span></div>
<div class="gn" style="top:1614px">19</div>
<svg class="a" style="left:894px;top:1627.5px" width="10" height="7" viewBox="0 0 10 7"><path d="M0 0 H10 L5 6.5 Z" fill="#777"/></svg>
<div class="cl" style="top:1615px"><span style="color:#000">    </span><span style="color:#760052">&quot;token&quot;</span><span style="color:#000">: {</span></div>
<div class="gn" style="top:1646px">20</div>
<div class="cl" style="top:1647px"><span style="color:#000">      </span><span style="color:#760052">&quot;token&quot;</span><span style="color:#000">: </span><span style="color:#2a00ff">&quot;eyJhbGciOiJSUzI1NiJ9.eyJzdWIiOiIyIiwiYWNjb3VudCI6Inp1aWhvdSIsIm5hbWUiOiLmnIDlkI7nmoTmvJTnpLrotKblj7ciLCJvcmdpZCI6MTAwLCJzdGF0aW9uaWQiOjEwMCwiZXhwIjoxNTY4MjM3Njc2fQ</span></div>
<div class="cl" style="top:1679px"><span style="color:#000">          </span><span style="color:#2a00ff">.DqDXZd_Y0iWkgYJt1OGh_puSkB7Q2lWmYkH9RZYMr_2uDul6mi88YOneTFHNNuHarviRtf6zFLMLf4AvHQre8m3bUYLRaeLJ95awhUyw0s43BYZTLFMHa79OynSWqpsm_lDI3BfnYnwXrgGOGTeL6htJ1YUIx6Yy19BYBfUft8s&quot;</span><span style="color:#000">,</span></div>
<div class="gn" style="top:1710px">21</div>
<div class="cl" style="top:1711px"><span style="color:#000">      </span><span style="color:#760052">&quot;expire&quot;</span><span style="color:#000">: </span><span style="color:#000090">43200</span></div>
<div class="gn" style="top:1742px">22</div>
<div class="cl" style="top:1743px"><span style="color:#000">    }</span></div>
<div class="gn" style="top:1774px">23</div>
<div class="cl" style="top:1775px"><span style="color:#000">  },</span></div>
<div class="gn" style="top:1806px">24</div>
<div class="cl" style="top:1807px"><span style="color:#000">  </span><span style="color:#760052">&quot;msg&quot;</span><span style="color:#000">: </span><span style="color:#2a00ff">&quot;ok&quot;</span><span style="color:#000">,</span></div>
<div class="gn" style="top:1838px">25</div>
<div class="cl" style="top:1839px"><span style="color:#000">  </span><span style="color:#760052">&quot;isError&quot;</span><span style="color:#000">: false,</span></div>
<div class="gn" style="top:1870px">26</div>
<div class="cl" style="top:1871px"><span style="color:#000">  </span><span style="color:#760052">&quot;isSuccess&quot;</span><span style="color:#000">: true</span></div>
<div class="gn" style="top:1902px">27</div>
<div class="cl" style="top:1903px"><span style="color:#000">}</span></div>
<div class="ds" style="top:1169px"><i>账</i><i>号</i></div>
<div class="ds" style="top:1201px"><i>姓</i><i>名</i></div>
<div class="ds" style="top:1233px"><i>组</i><i>织</i>ID</div>
<div class="ds" style="top:1265px"><i>岗</i><i>位</i>ID</div>
<div class="ds" style="top:1297px"><i>手</i><i>机</i></div>
<div class="ds" style="top:1329px"><i>性</i><i>别</i></div>
<div class="ds" style="top:1361px"><i>描</i><i>述</i></div>
<div class="ds" style="top:1393px"><i>编</i><i>码</i>,<i>可</i><i>用</i><i>值</i>:W,M</div>
<div class="ds" style="top:1457px"><i>是</i><i>否</i><i>可</i><i>登</i><i>陆</i></div>
<div class="ds" style="top:1489px"><i>删</i><i>除</i><i>标</i><i>记</i></div>
<div class="ds" style="top:1521px"><i>照</i><i>片</i></div>
<div class="ds" style="top:1553px"><i>工</i><i>作</i><i>描</i><i>述</i></div>
</div><!-- ===== ANNOTATIONS ===== -->
<svg class="a" style="left:0;top:0;pointer-events:none" width="3734" height="1942" viewBox="0 0 3734 1942">
 <g fill="none" stroke="#ee1c1c" stroke-width="6">
  <rect x="19" y="187" width="648" height="78"/>
  <rect x="17" y="923" width="409" height="82"/>
 </g>
 <g stroke="#ee1c1c" stroke-width="5" stroke-linecap="round" fill="none">
  <path d="M532 305.7 L296 910"/>
  <path d="M451.5 977.6 L795 779"/>
  <path d="M3672 487.6 L1462 1625"/>
 </g>
 <g fill="#ee1c1c">
  <path d="M288.2 929.3 L287 907.8 L294 911 L303.7 914.3 Z"/>
  <path d="M807.8 772 L786 774.3 L792 778 L793.8 789.2 Z"/>
  <path d="M1448.4 1633.7 L1462.4 1616.7 L1464 1625 L1469.9 1632.5 Z"/>
 </g>
</svg>
</body></html>
